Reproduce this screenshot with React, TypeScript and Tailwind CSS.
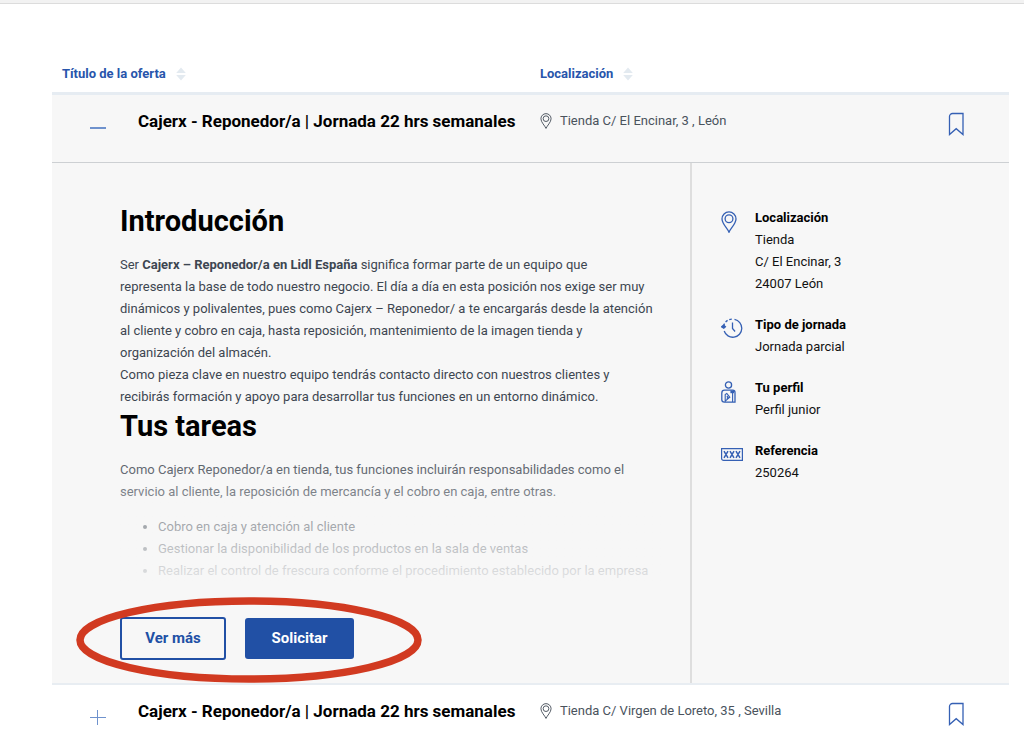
import { Fragment, ReactNode, useState } from "react";

interface Offer {
  id: string;
  title: string;
  place: string;
}

const offers: Offer[] = [
  {
    id: "250264",
    title: "Cajerx - Reponedor/a | Jornada 22 hrs semanales",
    place: "Tienda C/ El Encinar, 3 , León",
  },
  {
    id: "250265",
    title: "Cajerx - Reponedor/a | Jornada 22 hrs semanales",
    place: "Tienda C/ Virgen de Loreto, 35 , Sevilla",
  },
];

function PinIcon({ className }: { className: string }) {
  return (
    <svg viewBox="0 0 16 22" fill="none" stroke="currentColor" strokeWidth="1.3" className={className}>
      <path d="M8 21.2C6.600 17.600 1 12.600 1 7.900a7 7 0 0 1 14 0c0 4.700-5.600 9.700-7 13.300Z" />
      <circle cx="8" cy="7.800" r="3.900" />
    </svg>
  );
}

function ClockIcon() {
  return (
    <svg viewBox="0 0 22 20" fill="none" stroke="currentColor" strokeWidth="1.3" className="w-[22px] h-5">
      <path d="M13.500 1.400A9 9 0 1 1 3.200 13" />
      <path d="M2.600 8a9 9 0 0 1 9.600-6.900" strokeDasharray="2.600 1.800" />
      <path d="M0.600 8.800l2-1.600 1.800 1.600-1.600 1.400Z" fill="currentColor" />
      <path d="M11.500 4.500v6l2.600 3" />
    </svg>
  );
}

function ProfileIcon() {
  return (
    <svg viewBox="0 0 16 22" fill="none" stroke="currentColor" strokeWidth="1.3" className="w-4 h-[22px]">
      <circle cx="7.500" cy="4" r="3.100" />
      <path d="M3.600 9.200h8.200c1.300 0 2.200.9 2.200 2.200v9.800H3.400C1.800 21.200.8 20.200.8 18.800v-6.800c0-1.700 1.100-2.800 2.800-2.800Z" />
      <path d="M4.200 21v-7.500l1.600-1 3 3.700-4.600 4M5.800 15l1.200 1.200-1.200 1.300M11.600 12v9" strokeWidth="1.100" />
      <path d="M9.400 9.500h3.600v2.700H9.400z" fill="currentColor" stroke="none" />
    </svg>
  );
}

function ReferenceIcon() {
  return (
    <svg viewBox="0 0 22 13" fill="none" stroke="currentColor" className="w-[22px] h-[13px]">
      <path d="M.6.6h20.800v11.800H2.600a2 2 0 0 1-2-2Z" strokeWidth="1.200" />
      <path
        d="M3 3.200l4 6.600M7 3.200l-4 6.600M9 3.200l4 6.600M13 3.200l-4 6.600M15 3.200l4 6.600M19 3.200l-4 6.600"
        strokeWidth="1.500"
      />
    </svg>
  );
}

function SortButton({ label }: { label: string }) {
  return (
    <button type="button" className="flex items-center gap-2.5 font-bold">
      {label}
      <svg viewBox="0 0 10 14" fill="#e3eaf0" className="w-2.5 h-3.5">
        <path d="M5 .5 9.800 6H.2Z" />
        <path d="M5 13.500 9.800 8H.2Z" />
      </svg>
    </button>
  );
}

function Fact({ icon, title, children }: { icon: ReactNode; title: string; children: ReactNode }) {
  return (
    <div className="flex">
      <div className="w-[34px] shrink-0 pt-1 text-[#3560b4]">{icon}</div>
      <div>
        <h3 className="font-bold text-black">{title}</h3>
        {children}
      </div>
    </div>
  );
}

function OfferDetail() {
  return (
    <div className="grid grid-cols-[2fr_1fr] text-[13px] leading-[22px]">
      <div className="pl-[68px] pr-6 pt-10 pb-[23px]">
        <div className="relative text-[#3d4651]">
          <h2 className="mb-[15px] text-[29px] leading-9 font-bold text-black">Introducción</h2>
          <p>
            Ser <strong>Cajerx – Reponedor/a en Lidl España</strong> significa formar parte de un equipo que
            <br />
            representa la base de todo nuestro negocio. El día a día en esta posición nos exige ser muy
            <br />
            dinámicos y polivalentes, pues como Cajerx – Reponedor/ a te encargarás desde la atención
            <br />
            al cliente y cobro en caja, hasta reposición, mantenimiento de la imagen tienda y
            <br />
            organización del almacén.
          </p>
          <p>
            Como pieza clave en nuestro equipo tendrás contacto directo con nuestros clientes y
            <br />
            recibirás formación y apoyo para desarrollar tus funciones en un entorno dinámico.
          </p>
          <h2 className="mb-[15px] text-[29px] leading-9 font-bold text-black">Tus tareas</h2>
          <p>
            Como Cajerx Reponedor/a en tienda, tus funciones incluirán responsabilidades como el
            <br />
            servicio al cliente, la reposición de mercancía y el cobro en caja, entre otras.
          </p>
          <ul className="mt-[13px] pl-[38px] list-disc">
            <li>Cobro en caja y atención al cliente</li>
            <li>Gestionar la disponibilidad de los productos en la sala de ventas</li>
            <li>Realizar el control de frescura conforme el procedimiento establecido por la empresa</li>
          </ul>
          <div className="absolute inset-x-0 bottom-0 h-36 bg-linear-to-b from-[#f7f7f7]/0 to-[#f7f7f7]/90" />
        </div>
        <div className="relative flex items-center gap-[19px] mt-[35px] text-[15px] font-bold">
          <button
            type="button"
            className="w-[106px] h-[43px] rounded-[3px] border-2 border-[#2150a5] text-[#2150a5]"
          >
            Ver más
          </button>
          <button type="button" className="w-[109px] h-[41px] rounded-[3px] bg-[#2150a5] text-white">
            Solicitar
          </button>
          <svg
            viewBox="0 0 346 86"
            fill="none"
            className="absolute -left-11 -top-5 w-[346px] h-[86px] pointer-events-none"
          >
            <ellipse cx="173" cy="43" rx="169" ry="39" stroke="#d13a21" strokeWidth="7.500" />
          </svg>
        </div>
      </div>
      <aside className="flex flex-col gap-[19px] pl-[29px] pt-11 border-l-2 border-[#dedede] text-[#111]">
        <Fact icon={<PinIcon className="w-4 h-[22px]" />} title="Localización">
          <p>Tienda</p>
          <p>C/ El Encinar, 3</p>
          <p>24007 León</p>
        </Fact>
        <Fact icon={<ClockIcon />} title="Tipo de jornada">
          <p>Jornada parcial</p>
        </Fact>
        <Fact icon={<ProfileIcon />} title="Tu perfil">
          <p>Perfil junior</p>
        </Fact>
        <Fact icon={<div className="pt-1"><ReferenceIcon /></div>} title="Referencia">
          <p>250264</p>
        </Fact>
      </aside>
    </div>
  );
}

export default function App() {
  const [openId, setOpenId] = useState<string>("250264");

  return (
    <div className="min-h-screen overflow-hidden bg-white font-[Roboto,sans-serif] text-black">
      <div className="h-1 bg-[#f2f2f2] border-b border-[#dcdcdc]" />
      <main className="pl-[52px] pr-[15px] pt-[50px]">
        <table className="w-full table-fixed border-collapse text-left">
          <colgroup>
            <col className="w-[86px]" />
            <col className="w-[42%]" />
            <col />
            <col className="w-[106px]" />
          </colgroup>
          <thead className="text-[13px] leading-5 text-[#2855ab]">
            <tr className="h-[39px] align-top border-b-3 border-[#e6ecf2]">
              <th colSpan={2} className="pl-2.5 pt-2.5">
                <SortButton label="Título de la oferta" />
              </th>
              <th className="pt-2.5">
                <SortButton label="Localización" />
              </th>
              <th />
            </tr>
          </thead>
          <tbody>
            {offers.map((offer) => {
              const isOpen = offer.id === openId;

              return (
                <Fragment key={offer.id}>
                  <tr className={isOpen ? "h-[69px] align-top bg-[#f7f7f7]" : "h-[69px] align-top"}>
                    <td className="pl-[38px] pt-6">
                      <button
                        type="button"
                        aria-label={offer.title}
                        aria-expanded={isOpen}
                        className="block text-[#6f92cd]"
                        onClick={() => setOpenId(isOpen ? "" : offer.id)}
                      >
                        <svg viewBox="0 0 16 16" fill="none" stroke="currentColor" className="w-4 h-4">
                          {isOpen ? <path d="M0 9h16" strokeWidth="2" /> : <path d="M0 8.500h16M7.500 1v15" />}
                        </svg>
                      </button>
                    </td>
                    <td className="pt-3.5 text-[17px] leading-6 font-bold whitespace-nowrap">{offer.title}</td>
                    <td className="pt-[15px] text-[13px] leading-[22px] text-[#4a535d]">
                      <div className="flex items-center gap-2">
                        <PinIcon className="w-3 h-4" />
                        {offer.place}
                      </div>
                    </td>
                    <td className="pl-[45px] pt-[17px]">
                      <button type="button" aria-label="Guardar oferta" className="block text-[#3560b4]">
                        <svg viewBox="0 0 16 24" fill="none" stroke="currentColor" className="w-4 h-6">
                          <path d="M1.500 22.500V4.500a3 3 0 0 1 3-3h10.500v21l-6.800-5.800Z" strokeWidth="1.300" />
                        </svg>
                      </button>
                    </td>
                  </tr>
                  {isOpen && (
                    <tr className="bg-[#f7f7f7] border-t border-b-2 border-t-[#cdd0d3] border-b-[#e8edf2]">
                      <td colSpan={4}>
                        <OfferDetail />
                      </td>
                    </tr>
                  )}
                </Fragment>
              );
            })}
          </tbody>
        </table>
      </main>
    </div>
  );
}
